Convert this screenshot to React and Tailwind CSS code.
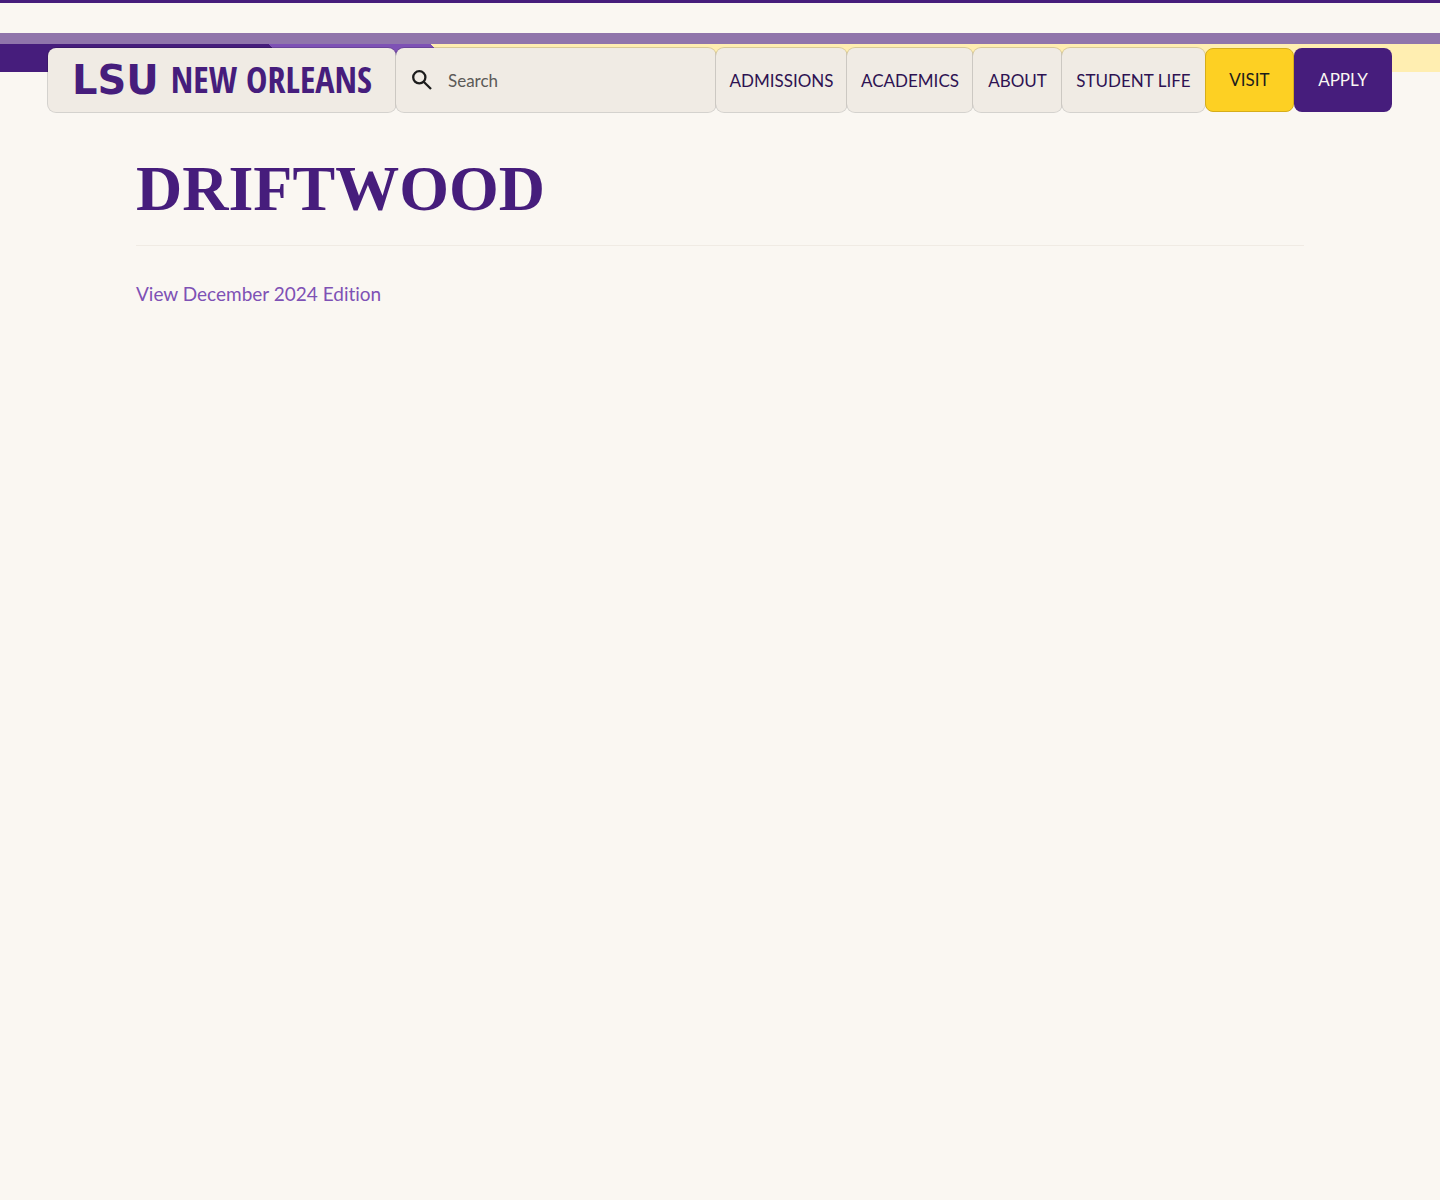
const navItems = [
    { label: "Admissions", width: "w-[131px]" },
    { label: "Academics", width: "w-[126px]" },
    { label: "About", width: "w-[89px]" },
    { label: "Student Life", width: "w-[143px]" },
];

const card = "h-16 rounded-lg bg-[#f0ebe4] shadow-[0_0_0_1px_rgba(0,0,0,0.15)]";

function SearchIcon() {
    return (
        <svg viewBox="0 0 20 20" className="size-5 shrink-0" fill="none" stroke="#1c1c1c" strokeWidth="2.3" aria-hidden="true">
            <circle cx="7.3" cy="7.3" r="6.1" />
            <path d="M11.7 11.7 19 19" />
        </svg>
    );
}

function Logo() {
    return (
        <a href="#" className={`${card} flex w-[348px] shrink-0 items-center gap-3 px-6 whitespace-nowrap text-[#461d7c]`}>
            <span className="font-['DejaVu_Sans',sans-serif] text-[40px] leading-none font-bold">LSU</span>
            <span className="font-['Open_Sans_Condensed','Roboto_Condensed',sans-serif] text-[36px] leading-none font-black">NEW ORLEANS</span>
        </a>
    );
}

function SearchBox() {
    return (
        <form role="search" className={`${card} flex min-w-0 flex-1 items-center gap-4 px-4`}>
            <label htmlFor="search" aria-label="Search">
                <SearchIcon />
            </label>
            <input
                id="search"
                type="search"
                placeholder="Search"
                className="min-w-0 flex-1 bg-transparent pt-0.5 outline-none placeholder:text-[#5c5a57]"
            />
        </form>
    );
}

export default function App() {
    return (
        <div className="min-h-screen bg-[#faf7f2] font-[Lato,sans-serif] text-[17px] leading-6">
            <div className="border-t-3 border-[#461d7c] pt-[30px]">
                <div className="h-[11px] bg-[#9075ab]" />
                <div className="h-7 bg-[linear-gradient(45deg,#461d7c_20.2%,#7e51b5_20.2%,#7e51b5_31.2%,#ffeeb1_31.2%)]" />
            </div>

            <header className="-mt-6 flex px-12">
                <Logo />
                <SearchBox />
                <nav className="flex shrink-0 uppercase">
                    {navItems.map((item) => (
                        <button key={item.label} type="button" className={`${card} ${item.width} pt-0.5 text-center whitespace-nowrap text-[#2e1252] uppercase`}>
                            {item.label}
                        </button>
                    ))}
                    <a href="#" className="flex h-16 w-[89px] items-center justify-center rounded-lg border border-[#d6ad1a] bg-[#fdd023] text-[#1c1c1c]">
                        Visit
                    </a>
                    <a href="#" className="flex h-16 w-[98px] items-center justify-center rounded-lg bg-[#461d7c] text-[#faf7f2]">
                        Apply
                    </a>
                </nav>
            </header>

            <main className="mx-auto max-w-[1168px] pt-10">
                <h1 className="border-b border-[#f0ebe4] pb-5 font-['Liberation_Serif',serif] text-[64px] leading-[73px] font-bold text-[#461d7c] uppercase">
                    Driftwood
                </h1>
                <p className="pt-9 text-[19px] leading-6 [font-variant-ligatures:none]">
                    <a href="#" className="text-[#7e51b5]">View December 2024 Edition</a>
                </p>
            </main>
        </div>
    );
}
